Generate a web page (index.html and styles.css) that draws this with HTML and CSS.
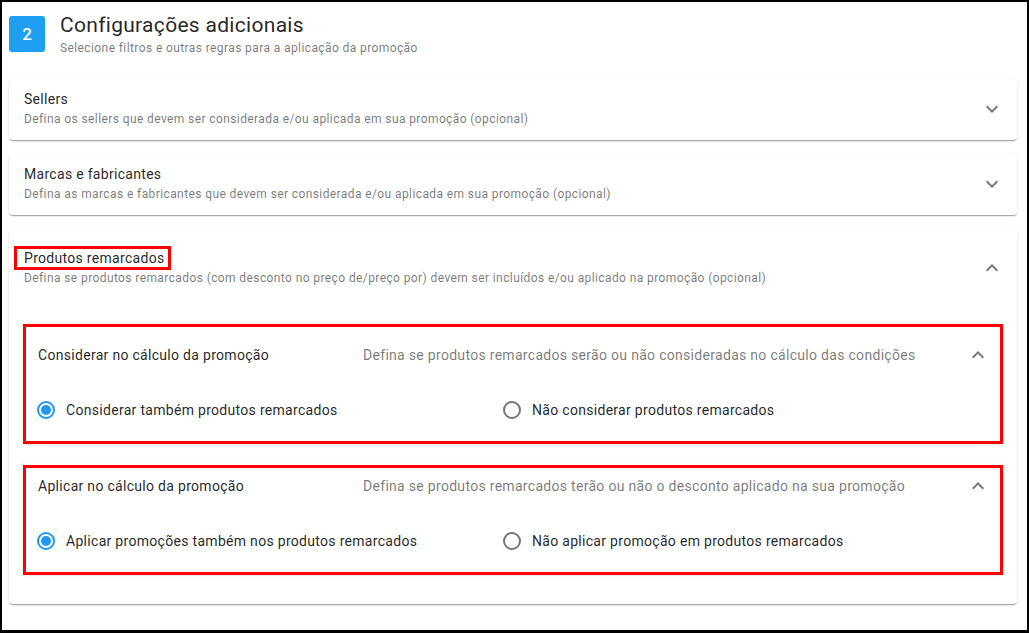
FILE: index.html
```html
<!DOCTYPE html>
<html lang="pt-BR">
<head>
  <meta charset="UTF-8" />
  <meta name="viewport" content="width=device-width, initial-scale=1.0"/>
  <title>Configurações adicionais</title>
  <link rel="stylesheet" href="styles.css">
</head>
<body>
  <div class="frame">
    <!-- Step header -->
    <header class="step">
      <div class="step-num">2</div>
      <div class="step-text">
        <h1 class="step-title">Configurações adicionais</h1>
        <p class="step-sub">Selecione filtros e outras regras para a aplicação da promoção</p>
      </div>
    </header>

    <!-- Sellers -->
    <div class="panel">
      <div class="panel-summary">
        <div class="panel-text">
          <div class="panel-title">Sellers</div>
          <div class="panel-desc">Defina os sellers que devem ser considerada e/ou aplicada em sua promoção (opcional)</div>
        </div>
        <svg class="chev" viewBox="0 0 24 24"><path d="M7.41 8.59L12 13.17l4.59-4.58L18 10l-6 6-6-6 1.41-1.41z"/></svg>
      </div>
    </div>

    <!-- Marcas -->
    <div class="panel">
      <div class="panel-summary">
        <div class="panel-text">
          <div class="panel-title">Marcas e fabricantes</div>
          <div class="panel-desc">Defina as marcas e fabricantes que devem ser considerada e/ou aplicada em sua promoção (opcional)</div>
        </div>
        <svg class="chev" viewBox="0 0 24 24"><path d="M7.41 8.59L12 13.17l4.59-4.58L18 10l-6 6-6-6 1.41-1.41z"/></svg>
      </div>
    </div>

    <!-- Produtos remarcados (open) -->
    <div class="panel panel-open">
      <div class="panel-summary">
        <div class="panel-text">
          <div class="panel-title"><span class="mark-title">Produtos remarcados</span></div>
          <div class="panel-desc">Defina se produtos remarcados (com desconto no preço de/preço por) devem ser incluídos e/ou aplicado na promoção (opcional)</div>
        </div>
        <svg class="chev" viewBox="0 0 24 24"><path d="M7.41 15.41L12 10.83l4.59 4.58L18 14l-6-6-6 6z"/></svg>
      </div>

      <div class="panel-details">
        <div class="sub-panel sub-first">
          <div class="mark">
            <div class="sub-head">
              <div class="sub-title">Considerar no cálculo da promoção</div>
              <div class="sub-desc">Defina se produtos remarcados serão ou não consideradas no cálculo das condições</div>
              <svg class="chev" viewBox="0 0 24 24"><path d="M7.41 15.41L12 10.83l4.59 4.58L18 14l-6-6-6 6z"/></svg>
            </div>
            <div class="radios">
              <label class="radio checked"><span class="radio-dot"></span>Considerar também produtos remarcados</label>
              <label class="radio"><span class="radio-dot"></span>Não considerar produtos remarcados</label>
            </div>
          </div>
        </div>

        <div class="sub-panel sub-second">
          <div class="mark">
            <div class="sub-head">
              <div class="sub-title">Aplicar no cálculo da promoção</div>
              <div class="sub-desc">Defina se produtos remarcados terão ou não o desconto aplicado na sua promoção</div>
              <svg class="chev" viewBox="0 0 24 24"><path d="M7.41 15.41L12 10.83l4.59 4.58L18 14l-6-6-6 6z"/></svg>
            </div>
            <div class="radios">
              <label class="radio checked"><span class="radio-dot"></span>Aplicar promoções também nos produtos remarcados</label>
              <label class="radio"><span class="radio-dot"></span>Não aplicar promoção em produtos remarcados</label>
            </div>
          </div>
        </div>
      </div>
    </div>
  </div>
</body>
</html>
```

FILE: styles.css
```css
* {
  margin: 0;
  padding: 0;
  box-sizing: border-box;
  font-family: 'Roboto', sans-serif;
}

body {
  background-color: #FFFFFF;
  color: rgba(0, 0, 0, 0.87);
  overflow: hidden;
}

.frame {
  height: 633px;
  border: 2px solid #000;
  border-bottom-width: 3px;
  padding: 10px 10px 0 7px;
}

/* Step header */
.step {
  display: flex;
  align-items: center;
  gap: 15px;
  margin-bottom: 23px;
}

.step-num {
  width: 36px;
  height: 36px;
  border-radius: 3px;
  background-color: #1e9ff2;
  color: #FFFFFF;
  font-size: 17px;
  font-weight: 500;
  display: flex;
  align-items: center;
  justify-content: center;
}

.step-title {
  font-size: 21px;
  font-weight: 400;
  line-height: 27px;
  letter-spacing: 0.3px;
  color: rgba(0, 0, 0, 0.87);
}

.step-sub {
  font-size: 12px;
  line-height: 16px;
  letter-spacing: 0.4px;
  margin-top: 1px;
  color: rgba(0, 0, 0, 0.54);
}

/* Expansion panels */
.panel {
  background: #FFFFFF;
  border-radius: 4px;
  box-shadow: 0 2px 1px -1px rgba(0, 0, 0, 0.2), 0 1px 1px 0 rgba(0, 0, 0, 0.14), 0 1px 3px 0 rgba(0, 0, 0, 0.12);
  margin-bottom: 14px;
}

.panel + .panel-open {
  margin-top: 15px;
}

.panel-summary {
  display: flex;
  align-items: center;
  padding: 10px 13px 11px 15px;
}

.panel-open .panel-summary {
  padding-top: 18px;
  padding-bottom: 0;
}

.panel-text {
  flex: 1;
}

.panel-title {
  font-size: 14px;
  line-height: 20px;
  letter-spacing: 0.3px;
}

.mark-title {
  border: 3px solid #ff0000;
  padding: 1px 4px 1px 7px;
  margin-left: -10px;
}

.panel-desc {
  font-size: 12px;
  line-height: 20px;
  letter-spacing: 0.4px;
  color: rgba(0, 0, 0, 0.54);
}

.chev {
  width: 24px;
  height: 24px;
  fill: rgba(0, 0, 0, 0.54);
  flex-shrink: 0;
}

.panel-details {
  padding: 36px 14px 29px 14px;
}

/* Inner panels */
.sub-panel {
  border-radius: 4px;
  box-shadow: 0 1px 2px 0 rgba(0, 0, 0, 0.1), 0 0 1px 0 rgba(0, 0, 0, 0.08);
}

.sub-second {
  margin-top: 14px;
  padding-top: 7px;
}

.mark {
  border: 3px solid #ff0000;
  padding: 16px 10px 19px 12px;
}

.sub-second .mark {
  padding-top: 6px;
}

.sub-head {
  display: flex;
  align-items: center;
  font-size: 14px;
  line-height: 20px;
  letter-spacing: 0.3px;
}

.sub-title {
  width: 325px;
}

.sub-desc {
  flex: 1;
  color: rgba(0, 0, 0, 0.54);
}

.radios {
  display: grid;
  grid-template-columns: 466px 1fr;
  margin-top: 31px;
  padding-right: 24px;
}

.radio {
  display: flex;
  align-items: center;
  height: 24px;
  font-size: 14px;
  letter-spacing: 0.3px;
  color: rgba(0, 0, 0, 0.87);
}

.radio-dot {
  width: 18px;
  height: 18px;
  border: 2px solid rgba(0, 0, 0, 0.54);
  border-radius: 50%;
  margin: 0 11px 0 -1px;
  display: flex;
  align-items: center;
  justify-content: center;
}

.radio.checked .radio-dot {
  border-color: #2196f3;
}

.radio.checked .radio-dot::after {
  content: "";
  width: 10px;
  height: 10px;
  border-radius: 50%;
  background-color: #2196f3;
}
```
